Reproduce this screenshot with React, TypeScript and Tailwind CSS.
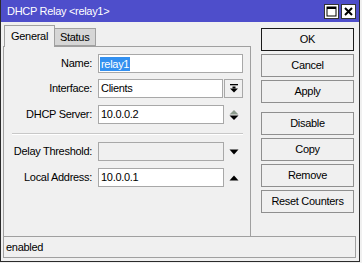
import React from "react";

const UpDown = () => (
  <svg width="10" height="12" viewBox="0 0 10 12" className="block">
    <polygon points="0.5,5.5 9.5,5.5 5,1" fill="#8c9a8c" />
    <polygon points="0.5,6.5 9.5,6.5 5,11" fill="#000" />
  </svg>
);

const Down = () => (
  <svg width="10" height="6" viewBox="0 0 10 6" className="block">
    <polygon points="0.5,0.5 9.5,0.5 5,5.5" fill="#000" />
  </svg>
);

const Up = () => (
  <svg width="10" height="6" viewBox="0 0 10 6" className="block">
    <polygon points="0.5,5.5 9.5,5.5 5,0.5" fill="#000" />
  </svg>
);

const DropIcon = () => (
  <svg width="8" height="9" viewBox="0 0 8 9" className="block">
    <rect x="0" y="0" width="8" height="1.3" fill="#000" />
    <rect x="2.5" y="2.5" width="3" height="2" fill="#000" />
    <polygon points="0,4.5 8,4.5 4,8.5" fill="#000" />
  </svg>
);

function Label({ children }: { children: React.ReactNode }) {
  return <div className="w-[88px] text-right leading-none">{children}</div>;
}

function Btn({ children, primary }: { children: React.ReactNode; primary?: boolean }) {
  return (
    <div
      className={
        "h-[23px] w-[93px] flex items-center justify-center bg-[#f0f0f0] border " +
        (primary ? "border-[#1a1a1a]" : "border-[#8f8f8f]")
      }
    >
      {children}
    </div>
  );
}

export default function App() {
  return (
    <div className="w-[362px] h-[263px] bg-[#f0f0f0] overflow-hidden font-['Liberation_Sans',Arial,sans-serif] text-[11px] tracking-[-0.3px] text-black">
      <div className="w-[360px] h-[262px] border-l border-r border-b border-[#2b2b2b] bg-[#f0f0f0] flex flex-col">
        {/* title bar */}
        <div className="h-[22px] bg-[#4e4ecb] flex items-center pl-[6px] pr-[3px] text-white">
          <span className="flex-1 text-[11px]">DHCP Relay &lt;relay1&gt;</span>
          <div className="flex gap-[2px]">
            <div className="w-[15px] h-[15px] bg-white border border-[#333] flex items-center justify-center">
              <svg width="11" height="11" viewBox="0 0 11 11" className="block">
                <rect x="1" y="1" width="9" height="9" fill="none" stroke="#000" strokeWidth="1" />
                <rect x="1" y="1" width="9" height="2" fill="#000" />
              </svg>
            </div>
            <div className="w-[15px] h-[15px] bg-white border border-[#333] flex items-center justify-center">
              <svg width="9" height="9" viewBox="0 0 9 9" className="block">
                <path d="M1 1 L8 8 M8 1 L1 8" stroke="#000" strokeWidth="2" />
              </svg>
            </div>
          </div>
        </div>

        {/* body */}
        <div className="flex pl-[2px]">
          {/* left column */}
          <div className="w-[248px] flex flex-col">
            <div className="h-[24px] flex items-end relative">
              <div className="ml-[1px] w-[51px] h-[22px] bg-[#f0f0f0] border-l border-t border-r border-[#a0a0a0] relative top-[1px] z-10 flex items-center pl-[6px] pb-[1px]">
                General
              </div>
              <div className="w-[41px] h-[18px] bg-[#d6d6d6] border-t border-r border-b border-[#a0a0a0] flex items-center pl-[5px]">
                Status
              </div>
            </div>
            <div className="h-[190px] border-l border-r border-t border-[#a0a0a0] pt-[7px] flex flex-col">
              {/* Name */}
              <div className="flex items-center h-[19px]">
                <Label>Name:</Label>
                <div className="ml-[6px] w-[145px] h-[19px] bg-white border border-[#a8a8a8] flex items-center pl-[1px]">
                  <span className="bg-[#3390f0] text-white px-[1px] leading-[14px]">relay1</span>
                </div>
              </div>
              {/* Interface */}
              <div className="flex items-center h-[19px] mt-[6px]">
                <Label>Interface:</Label>
                <div className="ml-[6px] w-[125px] h-[19px] bg-white border border-[#a8a8a8] flex items-center pl-[2px]">
                  Clients
                </div>
                <div className="ml-[1px] w-[19px] h-[19px] bg-[#f0f0f0] border border-[#a8a8a8] flex items-center justify-center">
                  <DropIcon />
                </div>
              </div>
              {/* DHCP Server */}
              <div className="flex items-center h-[19px] mt-[7px]">
                <Label>DHCP Server:</Label>
                <div className="ml-[6px] w-[126px] h-[19px] bg-white border border-[#a8a8a8] flex items-center pl-[2px]">
                  10.0.0.2
                </div>
                <div className="ml-[5px]">
                  <UpDown />
                </div>
              </div>
              {/* separator */}
              <div className="mt-[9px] ml-[8px] w-[231px] h-[2px] border-t border-[#c8c8c8] border-b border-b-white" />
              {/* Delay Threshold */}
              <div className="flex items-center h-[19px] mt-[7px]">
                <Label>Delay Threshold:</Label>
                <div className="ml-[6px] w-[126px] h-[19px] bg-[#f0f0f0] border border-[#a8a8a8]" />
                <div className="ml-[5px]">
                  <Down />
                </div>
              </div>
              {/* Local Address */}
              <div className="flex items-center h-[19px] mt-[7px]">
                <Label>Local Address:</Label>
                <div className="ml-[6px] w-[126px] h-[19px] bg-white border border-[#a8a8a8] flex items-center pl-[2px]">
                  10.0.0.1
                </div>
                <div className="ml-[5px]">
                  <Up />
                </div>
              </div>
            </div>
          </div>

          {/* right column */}
          <div className="ml-[10px] pt-[6px] flex flex-col gap-[3px]">
            <Btn primary>OK</Btn>
            <Btn>Cancel</Btn>
            <Btn>Apply</Btn>
            <div className="mt-[6px]">
              <Btn>Disable</Btn>
            </div>
            <Btn>Copy</Btn>
            <Btn>Remove</Btn>
            <Btn>Reset Counters</Btn>
          </div>
        </div>

        {/* status bar */}
        <div className="ml-[2px] w-[353px] h-[22px] border border-[#a0a0a0] flex items-center pl-[2px]">
          enabled
        </div>
      </div>
    </div>
  );
}
